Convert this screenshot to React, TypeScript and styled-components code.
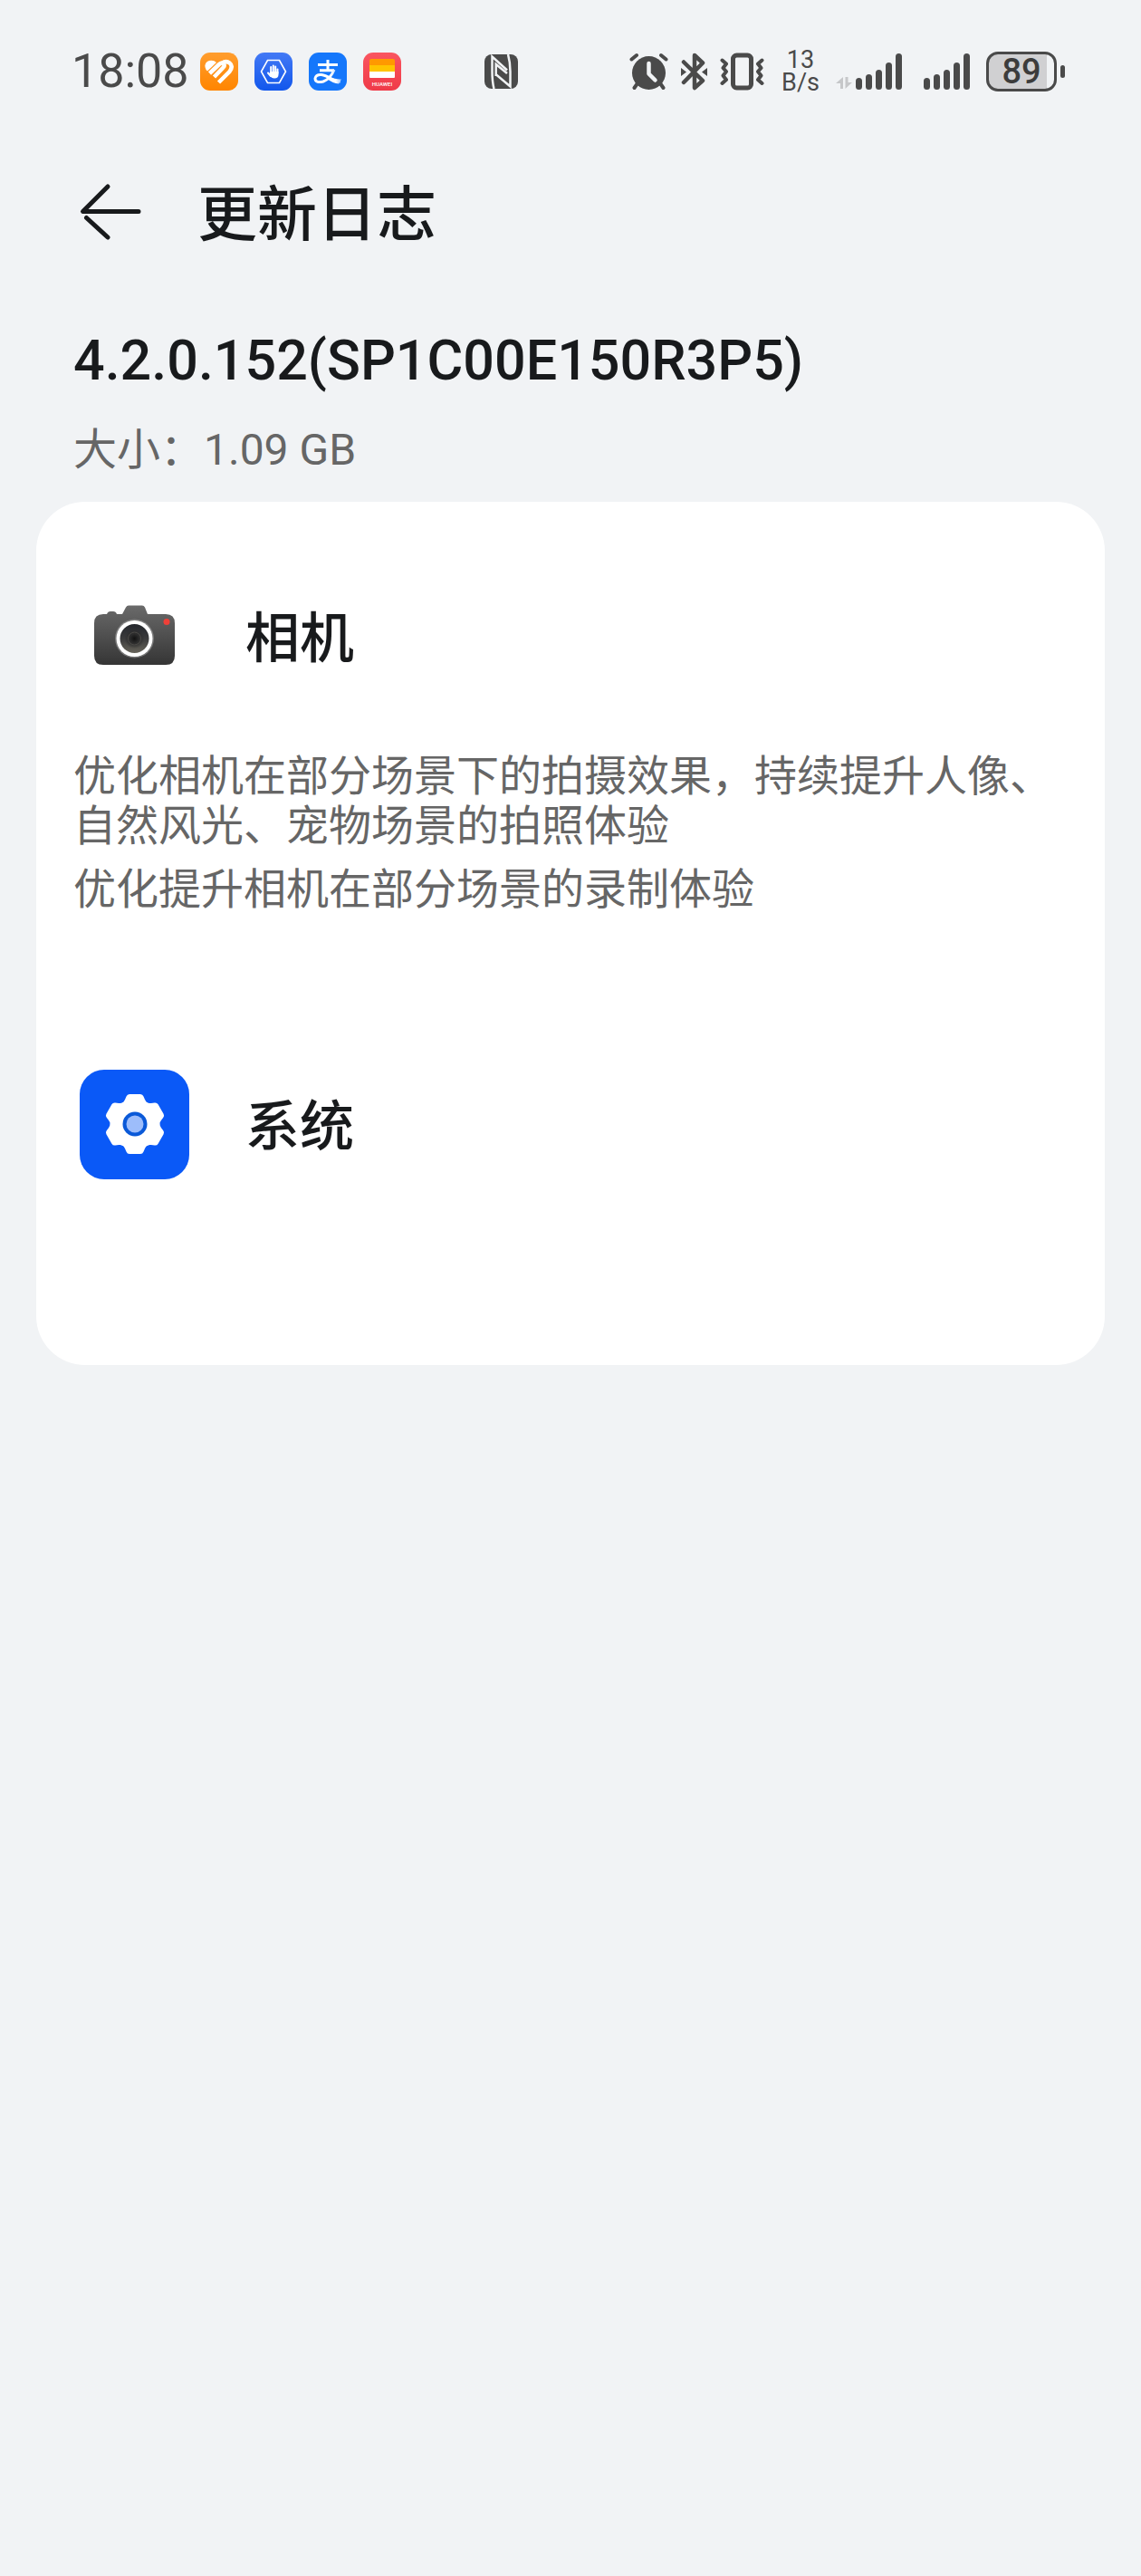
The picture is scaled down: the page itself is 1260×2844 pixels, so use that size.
import React from "react";
import styled, { createGlobalStyle } from "styled-components";

const GlobalStyle = createGlobalStyle`
  *, *::before, *::after { box-sizing: border-box; }
  body {
    margin: 0;
    background: #f1f3f5;
    color: #181a1c;
    font-family: Roboto, "Noto Sans CJK SC", sans-serif;
  }
`;

const Screen = styled.div`
  min-height: 100vh;
  background: #f1f3f5;
`;

const StatusBar = styled.header`
  display: flex;
  justify-content: space-between;
  align-items: center;
  height: 158px;
  padding: 0 84px 0 79px;
  color: #4a4a4a;
`;

const StatusGroup = styled.div<{ $gap: number }>`
  display: flex;
  align-items: center;
  gap: ${(p) => p.$gap}px;
`;

const Clock = styled.time`
  font-size: 52px;
  line-height: 60px;
  white-space: nowrap;
`;

const Speed = styled.div`
  display: flex;
  flex-direction: column;
  align-items: center;
  font-size: 27px;
  line-height: 25px;
`;

const BatteryBody = styled.div`
  display: grid;
  place-items: center;
  width: 78px;
  height: 44px;
  border: 3px solid #4a4a4a;
  border-radius: 13px;
  background: linear-gradient(90deg, #d0d0d2 89%, #f1f3f5 89%);
  color: #3c3c3c;
  font-size: 38px;
  font-weight: 500;
  line-height: 38px;
`;

const BatteryNub = styled.div`
  width: 5px;
  height: 14px;
  border-radius: 3px;
  background: #4a4a4a;
`;

const TitleBar = styled.nav`
  display: flex;
  align-items: center;
  gap: 58px;
  height: 152px;
  padding: 0 84px;
`;

const BackButton = styled.button`
  display: flex;
  padding: 0;
  border: 0;
  background: none;
  color: inherit;
  cursor: pointer;
`;

const Title = styled.h1`
  margin: 0;
  padding-top: 8px;
  font-size: 66px;
  font-weight: 500;
  line-height: 80px;
`;

const Release = styled.section`
  padding: 50px 81px 28px;
`;

const Version = styled.h2`
  margin: 0;
  font-size: 61px;
  font-weight: 500;
  line-height: 76px;
`;

const Size = styled.p`
  margin: 32px 0 0;
  color: #666;
  font-size: 48px;
  line-height: 58px;
`;

const Card = styled.main`
  margin: 0 40px;
  padding: 88px 41px 84px;
  border-radius: 54px;
  background: #fff;
`;

const Entry = styled.section`
  & + & {
    margin-top: 172px;
  }
`;

const EntryHead = styled.div`
  display: flex;
  align-items: center;
  gap: 62px;
  padding-left: 7px;
`;

const EntryTitle = styled.h3`
  margin: 0;
  padding-top: 6px;
  font-size: 60px;
  font-weight: 500;
  line-height: 72px;
`;

const Notes = styled.div`
  display: flex;
  flex-direction: column;
  gap: 15px;
  min-height: 55px;
  margin-top: 66px;
  color: #666;
  font-size: 47px;
  line-height: 55px;
`;

const Note = styled.p`
  margin: 0;
`;

const HealthIcon = () => (
  <svg width="42" height="42" viewBox="0 0 42 42" aria-hidden="true">
    <defs>
      <linearGradient id="health" x1="0" y1="0" x2="0" y2="1">
        <stop offset="0" stopColor="#ff9d2e" />
        <stop offset="1" stopColor="#ff8500" />
      </linearGradient>
    </defs>
    <rect width="42" height="42" rx="11" fill="url(#health)" />
    <path d="M5.500 16Q5 10.500 10 9q5-1 8 2L8 20.500Q6 19 5.500 16z" fill="#fff" />
    <path d="M10.500 23 21 13Q24 10.500 26 12.500Q27.500 14.500 25.500 16.500L15.500 27" fill="none" stroke="#fff" strokeWidth="4.500" />
    <path d="M20.500 33 32.500 21Q37 15 32.500 11.500Q28.500 8.500 24 12" fill="none" stroke="#fff" strokeWidth="4.500" />
  </svg>
);

const GuardIcon = () => (
  <svg width="42" height="42" viewBox="0 0 42 42" aria-hidden="true">
    <defs>
      <linearGradient id="guard" x1="0" y1="0" x2="0" y2="1">
        <stop offset="0" stopColor="#4379f5" />
        <stop offset="1" stopColor="#1257ec" />
      </linearGradient>
    </defs>
    <rect width="42" height="42" rx="11" fill="url(#guard)" />
    <path d="M14.500 8.500h13L34.500 21l-7 12.500h-13L7.500 21z" fill="none" stroke="#fff" strokeWidth="1.600" />
    <path d="M18.200 23v-7M20.800 22v-7.500M23.200 22v-6.500M25.500 23v-4.500M18 26l-3-3.500" fill="none" stroke="#fff" strokeWidth="2" strokeLinecap="round" />
    <path d="M17.200 21h9.300v3.500q0 4-4.500 4-3 0-5.500-3.500z" fill="#fff" />
  </svg>
);

const PayIcon = () => (
  <svg width="42" height="42" viewBox="0 0 42 42" aria-hidden="true">
    <defs>
      <linearGradient id="tail" x1="0" x2="1">
        <stop offset="0.600" stopColor="#fff" />
        <stop offset="1" stopColor="#9cc6ff" />
      </linearGradient>
    </defs>
    <rect width="42" height="42" rx="11" fill="#1577fb" />
    <path d="M10 13.500h22M21 8v11M12 19.800h16" fill="none" stroke="#fff" strokeWidth="3" />
    <path d="M28 19Q24 29 16 32Q7 34 7 28.500Q8 24 14 24.500Q18 25 24 28.500T35 32" fill="none" stroke="url(#tail)" strokeWidth="3" />
    <path d="M22 26.500Q30 30 36 29.500L33 34.500Q27 34 20 29z" fill="url(#tail)" />
  </svg>
);

const WalletText = styled.text`
  font: 500 6px Roboto, sans-serif;
  fill: #fff;
`;

const WalletIcon = () => (
  <svg width="42" height="42" viewBox="0 0 42 42" aria-hidden="true">
    <defs>
      <linearGradient id="wallet" x1="0" y1="0" x2="0" y2="1">
        <stop offset="0" stopColor="#fa5560" />
        <stop offset="1" stopColor="#ef3a48" />
      </linearGradient>
    </defs>
    <rect width="42" height="42" rx="11" fill="url(#wallet)" />
    <path d="M7 14V9q0-2 2-2h24q2 0 2 2v5z" fill="#ff9900" />
    <path d="M7 14h28v7H7z" fill="#ffc400" />
    <path d="M7 21h28v6q0 1-1 1H8q-1 0-1-1z" fill="#fff" />
    <WalletText x="21" y="36.500" textAnchor="middle">HUAWEI</WalletText>
  </svg>
);

const NfcIcon = () => (
  <svg width="37" height="38" viewBox="0 0 37 38" role="img" aria-label="NFC">
    <rect width="37" height="38" rx="8" fill="#4a4a4a" />
    <g fill="none" stroke="#f1f3f5" strokeWidth="2.500">
      <path d="M10.500 38Q8.500 30 8.500 19V2.500L25 17.500" />
      <path d="M26 0Q28.500 9 28.500 19V35.500L12.500 22" />
      <path d="M12.700 24V11L25 21" />
    </g>
  </svg>
);

const AlarmIcon = () => (
  <svg width="43" height="42" viewBox="0 0 43 42" role="img" aria-label="Alarm">
    <g fill="none" stroke="#4a4a4a" strokeWidth="4" strokeLinecap="round">
      <path d="M2.500 7.500 8 3M40.500 7.500 35 3M9 34l-3.500 5M34 34l3.500 5" />
    </g>
    <circle cx="21.500" cy="22.500" r="18.500" fill="#4a4a4a" />
    <path d="M21.500 12v11.500l7 7" fill="none" stroke="#f1f3f5" strokeWidth="4.500" strokeLinecap="round" strokeLinejoin="round" />
  </svg>
);

const BluetoothIcon = () => (
  <svg width="29" height="42" viewBox="0 0 29 42" role="img" aria-label="Bluetooth">
    <path d="M3 10.500 24 31 15 39V3l9 8.500L3 33" fill="none" stroke="#4a4a4a" strokeWidth="4.500" strokeLinecap="round" strokeLinejoin="round" />
    <path d="M0 17l6 4.500L0 26zM29 17l-6 4.500 6 4.500z" fill="#4a4a4a" />
  </svg>
);

const VibrateIcon = () => (
  <svg width="50" height="42" viewBox="0 0 50 42" role="img" aria-label="Vibrate">
    <g fill="none" stroke="#4a4a4a" strokeLinecap="round" strokeLinejoin="round">
      <rect x="14.500" y="3" width="20" height="36" rx="4" strokeWidth="5" />
      <path d="M2.500 8.500 7 12.500 3.500 17 7 21 3.500 25.500 7 30 2.500 34M46.500 8.500 42 12.500 45.500 17 42 21 45.500 25.500 42 30 46.500 34" strokeWidth="4" />
    </g>
  </svg>
);

const barHeights = [13, 17, 22, 30, 40];

const SignalIcon = ({ data }: { data?: boolean }) => (
  <svg width={data ? 73 : 51} height="42" viewBox={data ? "-22 0 73 42" : "0 0 51 42"} role="img" aria-label="Signal">
    {data && (
      <path d="M-14 40h-3v-6h-5l8-7zM-11.500 27h3v6h4.500l-7.500 7z" fill="#c6c7c9" />
    )}
    {barHeights.map((h, i) => (
      <rect key={h} x={i * 11} y={41 - h} width="7" height={h} rx="3.500" fill="#4a4a4a" />
    ))}
  </svg>
);

const BackIcon = () => (
  <svg width="76" height="66" viewBox="0 0 76 66" aria-hidden="true">
    <g fill="none" stroke="#181a1c" strokeWidth="5" strokeLinecap="round">
      <path d="M35 5 7.500 32.500H69" strokeLinejoin="round" />
      <path d="M11.500 39.500 35 61" />
    </g>
  </svg>
);

const CameraIcon = () => (
  <svg width="121" height="121" viewBox="0 0 121 121" aria-hidden="true">
    <defs>
      <linearGradient id="body" x1="0" y1="0" x2="0" y2="1">
        <stop offset="0" stopColor="#6a6a6a" />
        <stop offset="1" stopColor="#353535" />
      </linearGradient>
      <linearGradient id="glass" x1="0" y1="0" x2="0" y2="1">
        <stop offset="0" stopColor="#23262c" />
        <stop offset="0.500" stopColor="#3b3b3c" />
        <stop offset="1" stopColor="#67645a" />
      </linearGradient>
      <radialGradient id="core">
        <stop offset="0" stopColor="#111" />
        <stop offset="0.450" stopColor="#2b2b2b" />
        <stop offset="1" stopColor="#2b2b2b" stopOpacity="0" />
      </radialGradient>
    </defs>
    <path d="M26 36H30Q31 33 34 33H37Q40 33 41 36H47L51 28.500Q52 26.500 54 26.500H69Q71 26.500 72 28.500L75 36H95Q105 36 105 46V82Q105 92 95 92H26Q16 92 16 82V46Q16 36 26 36Z" fill="url(#body)" />
    <circle cx="60.500" cy="63" r="21.500" fill="#999" opacity="0.600" />
    <circle cx="60.500" cy="63" r="20" fill="#fff" />
    <circle cx="60.500" cy="63" r="16" fill="url(#glass)" />
    <circle cx="60.500" cy="63" r="11" fill="url(#core)" />
    <circle cx="60.500" cy="63" r="7" fill="none" stroke="#4c4a47" strokeWidth="1" />
    <circle cx="96" cy="44.500" r="3.500" fill="#ee4038" />
  </svg>
);

const teeth = [0, 60, 120, 180, 240, 300];

const SettingsIcon = () => (
  <svg width="121" height="121" viewBox="0 0 121 121" aria-hidden="true">
    <rect width="121" height="121" rx="27" fill="#0a59f7" />
    <circle cx="61" cy="60" r="26.500" fill="#fff" />
    {teeth.map((angle) => (
      <path
        key={angle}
        d="M46 37Q49 36 50 33L51.500 29.500Q52.500 27 55 27H67Q69.500 27 70.500 29.500L72 33Q73 36 76 37L61 60Z"
        fill="#fff"
        transform={`rotate(${angle} 61 60)`}
      />
    ))}
    <circle cx="61" cy="60" r="13.500" fill="#0a59d8" />
    <circle cx="61" cy="60" r="9.500" fill="#9dbdfb" />
  </svg>
);

const entries = [
  {
    title: "相机",
    icon: <CameraIcon />,
    notes: [
      "优化相机在部分场景下的拍摄效果，持续提升人像、自然风光、宠物场景的拍照体验",
      "优化提升相机在部分场景的录制体验",
    ],
  },
  { title: "系统", icon: <SettingsIcon />, notes: [] },
];

export default function App() {
  return (
    <Screen>
      <GlobalStyle />
      <StatusBar>
        <StatusGroup $gap={92}>
          <StatusGroup $gap={12}>
            <Clock>18:08</Clock>
            <StatusGroup $gap={18}>
              <HealthIcon />
              <GuardIcon />
              <PayIcon />
              <WalletIcon />
            </StatusGroup>
          </StatusGroup>
          <NfcIcon />
        </StatusGroup>
        <StatusGroup $gap={18}>
          <StatusGroup $gap={14}>
            <AlarmIcon />
            <BluetoothIcon />
            <VibrateIcon />
          </StatusGroup>
          <Speed>
            <span>13</span>
            <span>B/s</span>
          </Speed>
          <StatusGroup $gap={24}>
            <SignalIcon data />
            <SignalIcon />
          </StatusGroup>
          <StatusGroup $gap={4}>
            <BatteryBody>89</BatteryBody>
            <BatteryNub />
          </StatusGroup>
        </StatusGroup>
      </StatusBar>
      <TitleBar>
        <BackButton type="button" aria-label="返回">
          <BackIcon />
        </BackButton>
        <Title>更新日志</Title>
      </TitleBar>
      <Release>
        <Version>4.2.0.152(SP1C00E150R3P5)</Version>
        <Size>大小：1.09 GB</Size>
      </Release>
      <Card>
        {entries.map((entry) => (
          <Entry key={entry.title}>
            <EntryHead>
              {entry.icon}
              <EntryTitle>{entry.title}</EntryTitle>
            </EntryHead>
            <Notes>
              {entry.notes.map((note) => (
                <Note key={note}>{note}</Note>
              ))}
            </Notes>
          </Entry>
        ))}
      </Card>
    </Screen>
  );
}
